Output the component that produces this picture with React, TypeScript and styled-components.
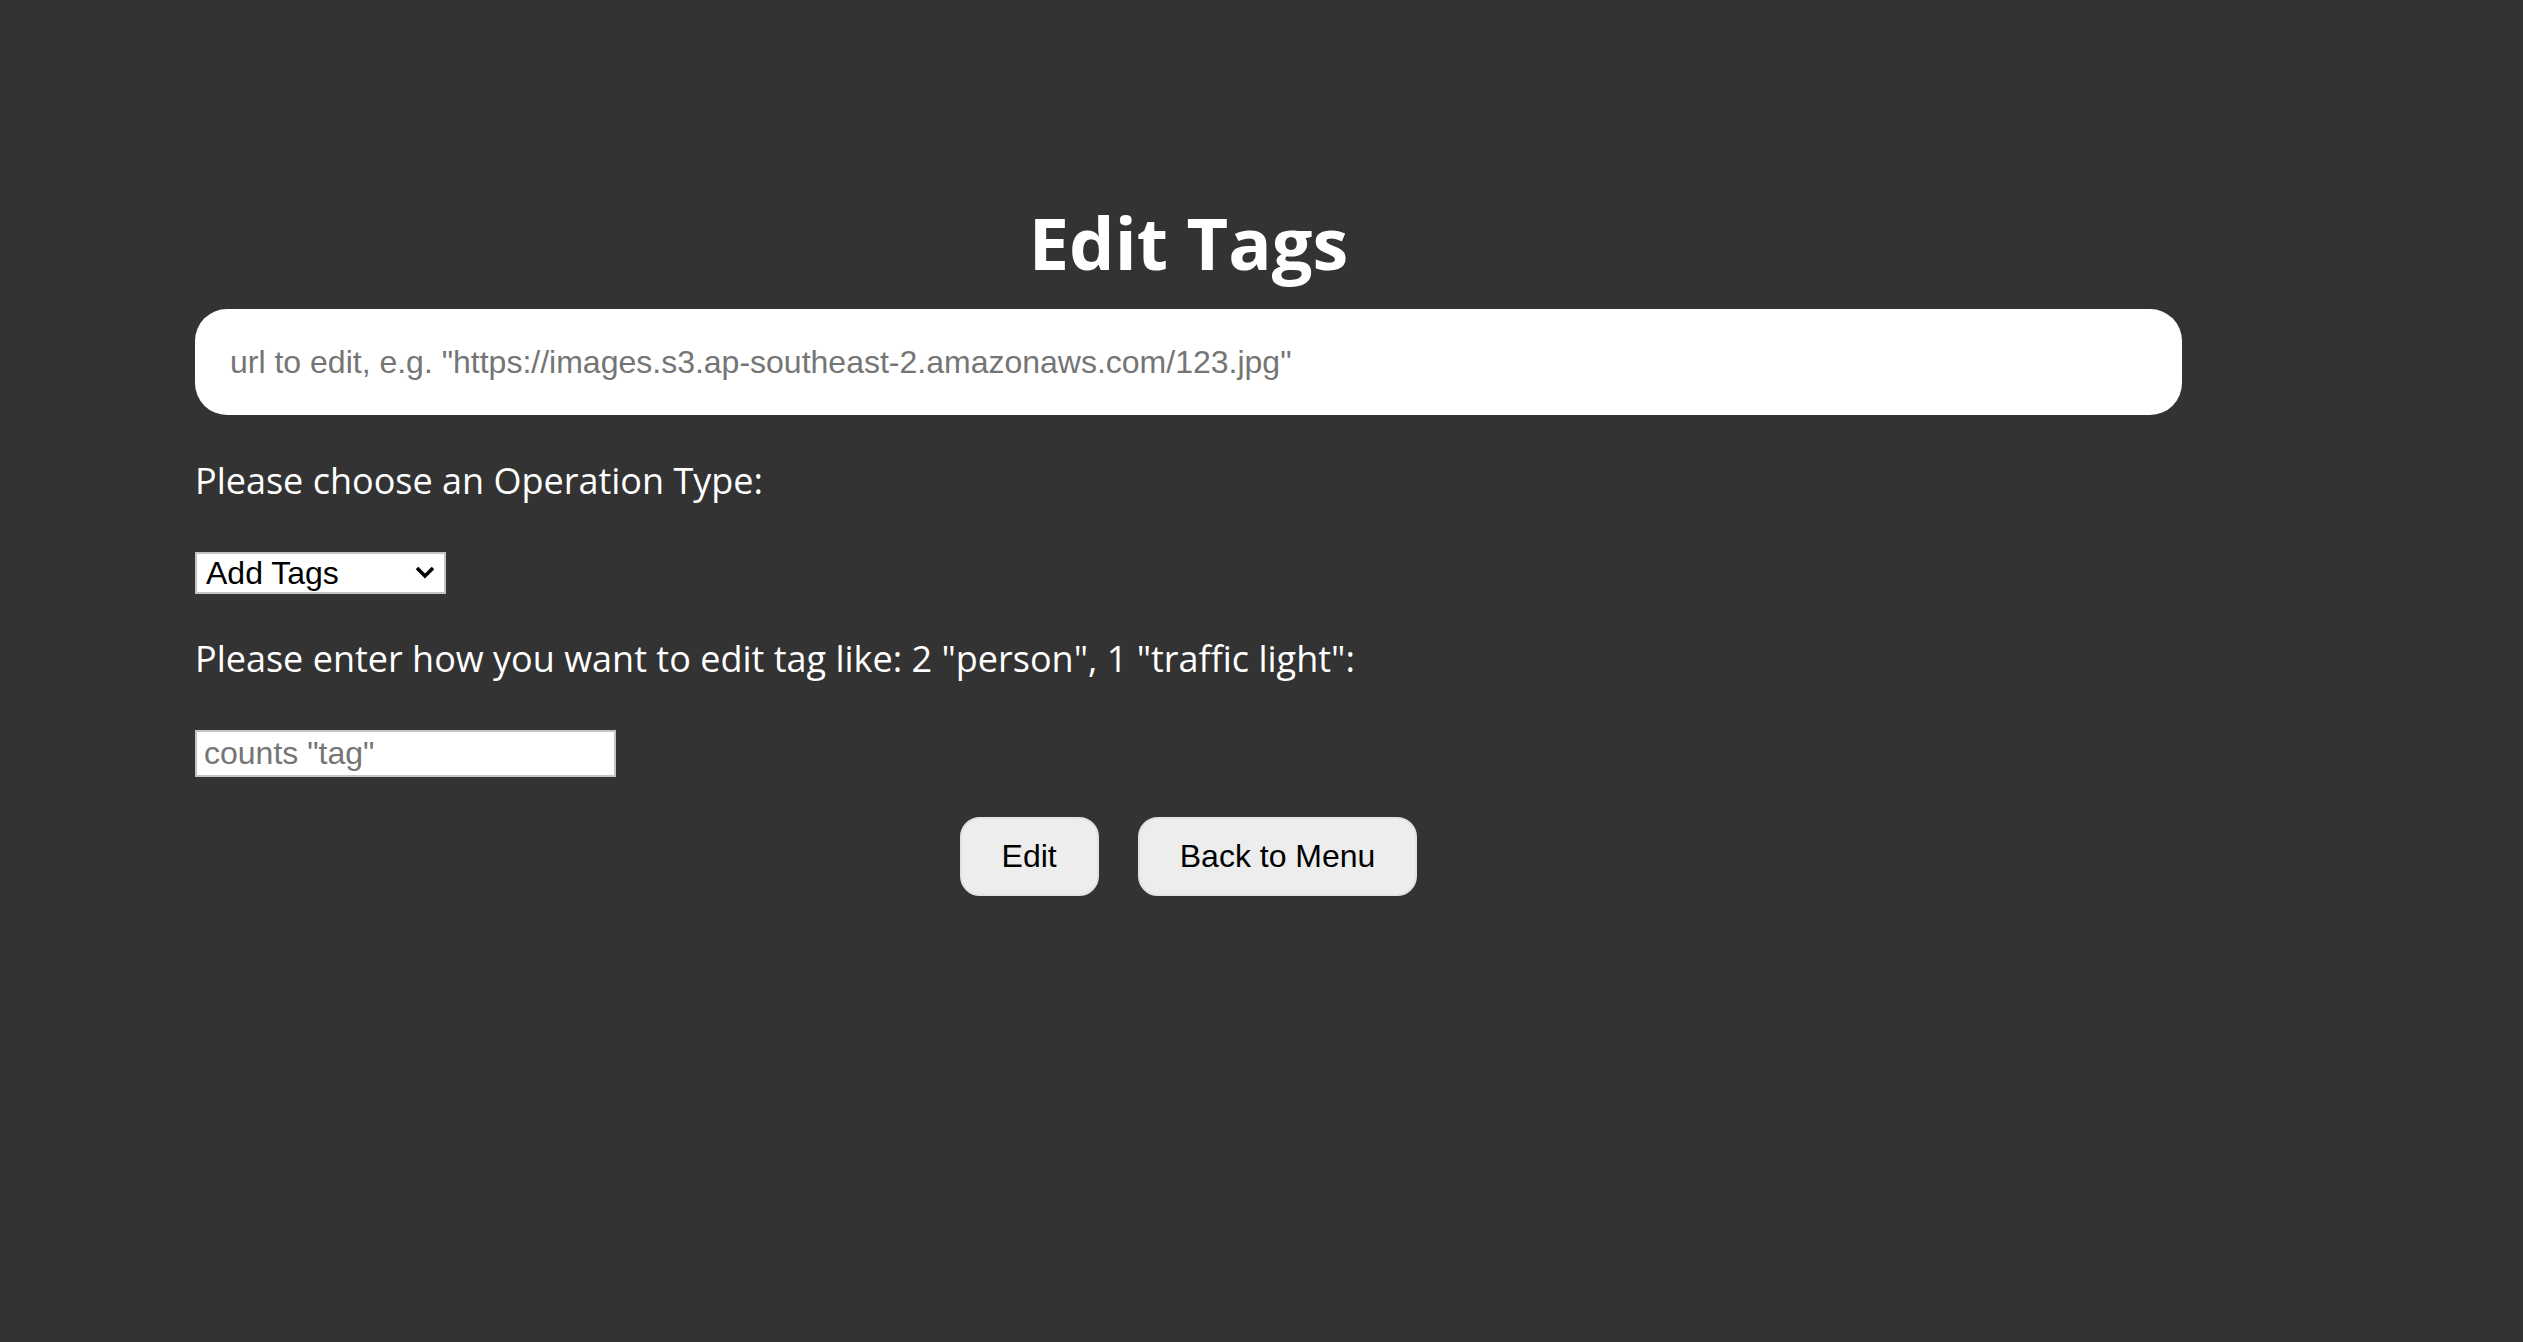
import React from "react";
import styled, { createGlobalStyle } from "styled-components";

const Global = createGlobalStyle`
  html, body {
    margin: 0;
    padding: 0;
    background: #333333;
  }
  body {
    font-family: "Open Sans", "Noto Sans", sans-serif;
    color: #ffffff;
  }
`;

const Page = styled.main`
  min-height: 1342px;
  box-sizing: border-box;
  padding: 203px 0 0 195px;
`;

const Column = styled.div`
  width: 1987px;
  display: flex;
  flex-direction: column;
  align-items: flex-start;
`;

const Title = styled.h1`
  align-self: stretch;
  margin: 0;
  font-family: "Open Sans", "Noto Sans", sans-serif;
  font-weight: 700;
  font-size: 72px;
  line-height: 78px;
  text-align: center;
  color: #ffffff;
`;

const UrlInput = styled.input`
  align-self: stretch;
  box-sizing: border-box;
  margin-top: 28px;
  height: 106px;
  border: none;
  border-radius: 32px;
  background: #ffffff;
  padding: 0 35px;
  font-family: "Liberation Sans", Arial, sans-serif;
  font-size: 32px;
  color: #000;
  outline: none;
  &::placeholder {
    color: #757575;
  }
`;

const Label = styled.p<{ $top: number }>`
  margin: ${(p) => p.$top}px 0 0 0;
  font-family: "Open Sans", "Noto Sans", sans-serif;
  font-size: 36px;
  line-height: 42px;
  color: #ffffff;
`;

const SelectWrap = styled.div`
  position: relative;
  margin-top: 50px;
  width: 251px;
  height: 42px;
`;

const Select = styled.select`
  appearance: none;
  -webkit-appearance: none;
  box-sizing: border-box;
  width: 100%;
  height: 100%;
  margin: 0;
  border: 2px solid #c4c4c4;
  border-radius: 0;
  background: #ffffff;
  padding: 0 0 0 9px;
  font-family: "Liberation Sans", Arial, sans-serif;
  font-size: 32px;
  color: #000000;
  outline: none;
`;

const Chevron = styled.svg`
  position: absolute;
  right: 10px;
  top: 12px;
  width: 22px;
  height: 16px;
  pointer-events: none;
`;

const CountInput = styled.input`
  box-sizing: border-box;
  margin-top: 50px;
  width: 421px;
  height: 47px;
  border: 2px solid #c4c4c4;
  border-radius: 0;
  background: #ffffff;
  padding: 0 7px;
  font-family: "Liberation Sans", Arial, sans-serif;
  font-size: 32px;
  color: #000;
  outline: none;
  &::placeholder {
    color: #757575;
  }
`;

const ButtonRow = styled.div`
  align-self: stretch;
  margin-top: 40px;
  display: flex;
  justify-content: center;
  gap: 39px;
`;

const Button = styled.button`
  box-sizing: border-box;
  height: 79px;
  padding: 0 40px;
  border: 2px solid #e2e2e2;
  border-radius: 20px;
  background: #ededed;
  font-family: "Liberation Sans", Arial, sans-serif;
  font-size: 32px;
  color: #000000;
  cursor: pointer;
`;

export default function App() {
  return (
    <>
      <Global />
      <Page>
        <Column>
          <Title>Edit Tags</Title>
          <UrlInput
            type="text"
            placeholder={'url to edit, e.g. "https://images.s3.ap-southeast-2.amazonaws.com/123.jpg"'}
          />
          <Label $top={45}>Please choose an Operation Type:</Label>
          <SelectWrap>
            <Select defaultValue="add">
              <option value="add">Add Tags</option>
              <option value="remove">Remove Tags</option>
            </Select>
            <Chevron viewBox="0 0 22 16">
              <path d="M3 4 L11 12 L19 4" fill="none" stroke="#000" strokeWidth="3.5" />
            </Chevron>
          </SelectWrap>
          <Label $top={44}>
            Please enter how you want to edit tag like: 2 "person", 1 "traffic light":
          </Label>
          <CountInput type="text" placeholder={'counts "tag"'} />
          <ButtonRow>
            <Button>Edit</Button>
            <Button>Back to Menu</Button>
          </ButtonRow>
        </Column>
      </Page>
    </>
  );
}
